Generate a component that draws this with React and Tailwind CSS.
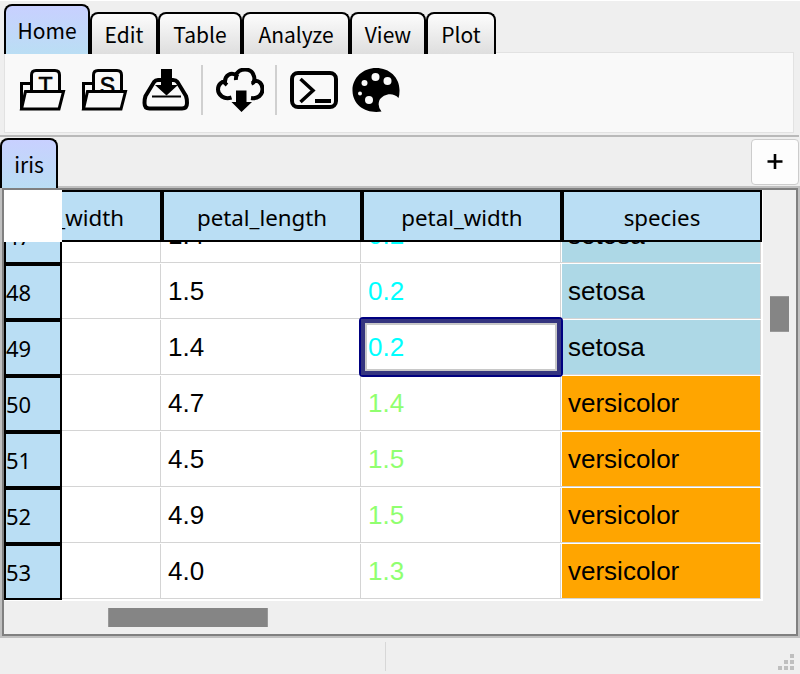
import React from "react";

const ribbonTabs = [
  { name: "Edit", width: "w-[68px]" },
  { name: "Table", width: "w-[84px]" },
  { name: "Analyze", width: "w-[108px]" },
  { name: "View", width: "w-[76px]" },
  { name: "Plot", width: "w-[70px]" },
];

const rows = [
  { id: 47, length: "1.4", width: "0.2", species: "setosa" },
  { id: 48, length: "1.5", width: "0.2", species: "setosa" },
  { id: 49, length: "1.4", width: "0.2", species: "setosa", selected: true },
  { id: 50, length: "4.7", width: "1.4", species: "versicolor" },
  { id: 51, length: "4.5", width: "1.5", species: "versicolor" },
  { id: 52, length: "4.9", width: "1.5", species: "versicolor" },
  { id: 53, length: "4.0", width: "1.3", species: "versicolor" },
];

function FolderIcon({ letter }) {
  return (
    <svg className="h-[44px] w-[48px]" viewBox="0 0 48 44" fill="none" stroke="#000" strokeWidth="3">
      <path d="M12.500 15.500H3.500V41" />
      <path d="M13.500 23V7Q13.500 2.500 18 2.500H37Q41.500 2.500 41.500 7V23" />
      <text x="27.500" y="25.500" textAnchor="middle" fill="#000" stroke="#000" strokeWidth="0.7" className="font-['Liberation_Sans'] text-[23px]">{letter}</text>
      <path d="M7.500 23.500H45.500L41 41H3.500Z" fill="#fafafa" />
    </svg>
  );
}

function SaveIcon() {
  return (
    <svg className="h-[44px] w-[48px]" viewBox="0 0 48 44">
      <path d="M17 12H32Q35 12 36.500 14L45 28Q46 31 46 35Q46 40.500 41 40.500H8.500Q3.500 40.500 3.500 35Q3.500 31 4.500 28L13 14Q14.500 12 17 12Z" fill="none" stroke="#000" strokeWidth="4" />
      <path d="M11 28.500H40" stroke="#000" strokeWidth="2" />
      <path d="M20 1H31V17H37L25.500 27.500L14 17H20Z" />
    </svg>
  );
}

function CloudIcon() {
  return (
    <svg className="h-[44px] w-[48px]" viewBox="0 0 48 44" fill="none" stroke="#000" strokeWidth="4">
      <path d="M15.500 29.500C8 32 2 27 2 21.500C2 16 6 13.500 9 13.500C9 7 15 4 20 7C23 0 35 -0.500 37.500 7Q39 10 38 13C43 12 46.500 16 46.500 21C46.500 27 42 31 35 30M20 12Q19.500 9 21.500 6M7.500 13Q8.500 15 11 17M35.500 15.500Q37.500 15 39.500 12" />
      <path d="M20 22.500H30.500V34H36L25.500 44L15.500 34H20Z" fill="#000" stroke="none" />
    </svg>
  );
}

function TerminalIcon() {
  return (
    <svg className="h-[44px] w-[48px]" viewBox="0 0 48 44" fill="none" stroke="#000">
      <rect x="2" y="5" width="44" height="34" rx="6" strokeWidth="4" />
      <path d="M10.500 11L23 22.500L10.500 34" strokeWidth="3.500" />
      <path d="M25 33H41" strokeWidth="4" />
    </svg>
  );
}

function PaletteIcon() {
  return (
    <svg className="h-[44px] w-[48px]" viewBox="0 0 48 44">
      <path d="M29.500 43.500C15 46 1 38 .5 23C0 10 11 0 24 0C38 0 48 10 47.500 23Q47.500 27 46.500 30C41 23.500 31 26 27.500 32Q25 38 29.500 43.500Z" />
      <g fill="#fafafa">
        <circle cx="23.500" cy="9" r="4" />
        <circle cx="35.500" cy="13" r="4" />
        <circle cx="12.500" cy="15" r="3" />
        <circle cx="8" cy="25.500" r="2" />
        <circle cx="17" cy="32" r="4" />
      </g>
    </svg>
  );
}

function DataRow({ row }) {
  const setosa = row.species === "setosa";
  return (
    <div className="flex h-[56px] shrink-0 text-[26px]">
      <div className="flex w-[58px] items-center border-2 border-black bg-[#badef4] pt-[1px] font-['Noto_Sans',sans-serif] text-[22px]">
        {row.id}
      </div>
      <div className="flex h-[55px] w-[99px] border-r border-b border-[#d4d4d4]" />
      <div className="flex h-[55px] w-[200px] items-center border-r border-b border-[#d4d4d4] pl-[7px]">
        {row.length}
      </div>
      <div className={`relative flex h-[55px] w-[200px] items-center border-r border-b border-[#d4d4d4] pl-[7px] ${setosa ? "text-[#00ffff]" : "text-[#90ff70]"}`}>
        {row.width}
        {row.selected && (
          <div className="absolute -top-[3px] -left-[2px] z-10 h-[60px] w-[204px] rounded-[4px] border-2 border-[#000080]">
            <div className="h-full w-full border-4 border-[#35357f]">
              <div className="h-full w-full border-2 border-[#c8c8c8]" />
            </div>
          </div>
        )}
      </div>
      <div className="flex h-[55px] w-[200px] border-r border-b border-[#d4d4d4] pl-px">
        <div className={`flex flex-1 items-center pl-[6px] ${setosa ? "bg-[#add8e6]" : "bg-[#ffa500]"}`}>
          {row.species}
        </div>
      </div>
    </div>
  );
}

export default function App() {
  return (
    <div className="flex h-[674px] w-[800px] flex-col overflow-hidden border-t border-white bg-[#efefef] font-['Liberation_Sans',Arial,sans-serif] text-black">
      <div className="relative z-10 flex h-[53px] shrink-0 items-end pl-[4px] font-['Noto_Sans_CJK_JP',sans-serif] text-[21px]">
        <div className="flex h-[50px] w-[86px] items-center justify-center rounded-t-[8px] border-2 border-b-0 border-black bg-linear-to-b from-[#c8d0ff] to-[#badef4] pt-[2px]">
          Home
        </div>
        {ribbonTabs.map((tab) => (
          <div key={tab.name} className={`flex h-[42px] items-center justify-center rounded-t-[8px] border-2 border-b-0 border-black bg-linear-to-b from-[#fcfcfc] to-[#dedede] pt-[2px] ${tab.width}`}>
            {tab.name}
          </div>
        ))}
      </div>
      <div className="-mt-[2px] ml-[4px] flex h-[81px] w-[790px] shrink-0 items-start self-start border border-[#e2e2e2] bg-[#f9f9f9] pt-[12px] pl-[13px]">
        <div className="flex h-[50px] items-center">
          <FolderIcon letter="T" />
          <div className="w-[14px]" />
          <FolderIcon letter="S" />
          <div className="w-[13px]" />
          <SaveIcon />
          <div className="mr-[13px] ml-[12px] h-full w-[2px] bg-[#d0d0d0]" />
          <CloudIcon />
          <div className="mr-[13px] ml-[11px] h-full w-[2px] bg-[#d0d0d0]" />
          <TerminalIcon />
          <div className="w-[14px]" />
          <PaletteIcon />
        </div>
      </div>
      <div className="mt-[2px] h-[2px] w-[799px] shrink-0 bg-[#b9b9b9]" />
      <div className="flex h-[53px] shrink-0 items-start justify-between pt-[1px] pr-px">
        <div className="relative z-10 flex h-[50px] w-[58px] items-center justify-center rounded-t-[8px] border-2 border-b-0 border-black bg-linear-to-b from-[#c8d0ff] to-[#badef4] pt-[2px] font-['Noto_Sans_CJK_JP',sans-serif] text-[21px]">
          iris
        </div>
        <div className="mt-px flex h-[46px] w-[48px] items-center justify-center rounded-[4px] border border-[#cccccc] bg-[#fdfdfd]">
          <svg className="h-[16px] w-[16px]" viewBox="0 0 16 16" fill="none" stroke="#000">
            <path d="M.5 7.500H15.500M8 0V15" strokeWidth="2.600" />
          </svg>
        </div>
      </div>
      <div className="-mt-[4px] h-[452px] shrink-0 border-2 border-[#c0c0c0]">
        <div className="flex h-full flex-col border-2 border-[#808080]">
          <div className="flex h-[411px] w-[759px] shrink-0 flex-col overflow-hidden bg-white">
            <div className="relative z-10 flex h-[52px] w-[758px] shrink-0 font-['Noto_Sans',sans-serif] text-[22.3px]">
              <div className="w-[58px] bg-white" />
              <div className="flex w-[100px] items-center justify-end overflow-hidden border-2 border-l-0 border-black bg-[#badef4] pt-[4px] pr-[36px] whitespace-nowrap">
                sepal_width
              </div>
              {["petal_length", "petal_width", "species"].map((name) => (
                <div key={name} className="flex w-[200px] items-center justify-center border-2 border-black bg-[#badef4] pt-[4px]">
                  {name}
                </div>
              ))}
            </div>
            <div className="-mt-[34px] flex flex-col">
              {rows.map((row) => (
                <DataRow key={row.id} row={row} />
              ))}
            </div>
          </div>
          <div className="flex h-[33px] items-center pl-[104px]">
            <div className="h-[19px] w-[160px] border-x border-[#999999] bg-[#858585]" />
          </div>
          <div className="-mt-[338px] mr-[7px] h-[36px] w-[19px] shrink-0 self-end border-y border-[#999999] bg-[#858585]" />
        </div>
      </div>
      <div className="flex h-[36px] shrink-0">
        <div className="mt-[4px] h-[29px] w-[386px] border-r border-[#d7d7d7]" />
        <div className="flex flex-1 items-end justify-end pr-[6px] pb-[4px]">
          <svg className="h-[16px] w-[16px]" viewBox="0 0 16 16" fill="#bfbfbf" shapeRendering="crispEdges">
            <path d="M12 0h4v4h-4zM6 6h4v4H6zM12 6h4v4h-4zM0 12h4v4H0zM6 12h4v4H6zM12 12h4v4h-4z" />
          </svg>
        </div>
      </div>
    </div>
  );
}
